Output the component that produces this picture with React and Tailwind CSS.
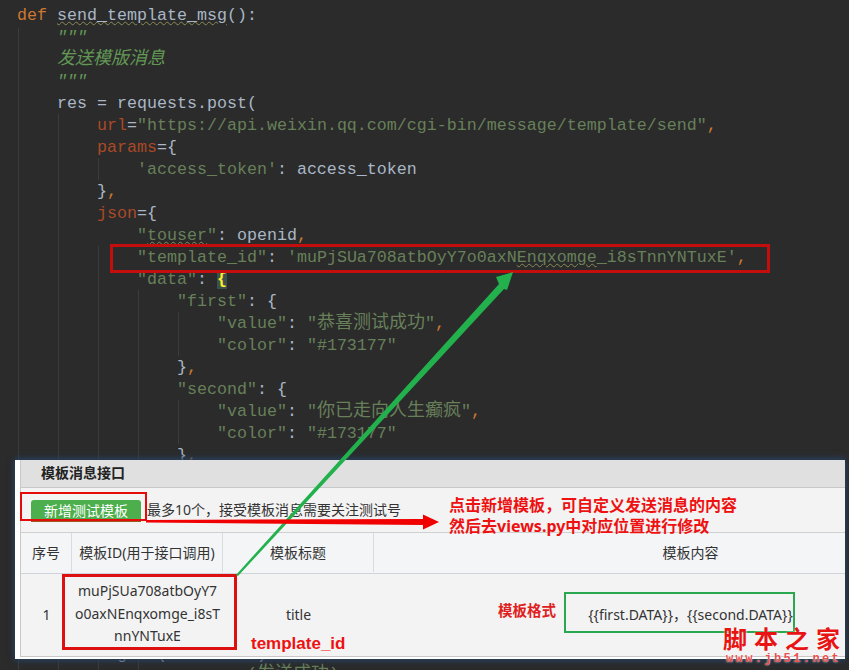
const mono = "font-['Liberation_Mono','Noto_Sans_CJK_SC',monospace]";
const sans = "font-['Noto_Sans','Noto_Sans_CJK_SC',sans-serif]";

const S = ({ c, children }) => <span className={c}>{children}</span>;
const str = "text-[#67805a]";
const key = "text-[#aa4926]";
const org = "text-[#cc7832]";
const doc = "text-[#629755] italic";
const cjk = "text-[18px] leading-[18px]";
const wavy = "underline decoration-wavy decoration-[#8a8a5a] decoration-1";

// 编辑器里露出来的每一行
const lines = [
  <><S c={org}>def </S><span className={wavy}>send_template_msg</span>():</>,
  <>    <S c={doc}>"""</S></>,
  <>    <S c={`${doc} ${cjk}`}>发送模版消息</S></>,
  <>    <S c={doc}>"""</S></>,
  <>    res = requests.post(</>,
  <>        <S c={key}>url</S>=<S c={str}>"https://api.weixin.qq.com/cgi-bin/message/template/send"</S><S c={org}>,</S></>,
  <>        <S c={key}>params</S>={"{"}</>,
  <>            <S c={str}>'access_token'</S>: access_token</>,
  <>        {"}"}<S c={org}>,</S></>,
  <>        <S c={key}>json</S>={"{"}</>,
  <>            <S c={str}>"<span className={wavy}>touser</span>"</S>: openid<S c={org}>,</S></>,
  <>            <S c={str}>"template_id"</S>: <S c={str}>'muPjSUa708atbOyY7o0axN<span className={wavy}>Enqxomge</span>_i8sTnnYNTuxE'</S><S c={org}>,</S></>,
  <>            <S c={str}>"data"</S>: <span className="bg-[#3b514d] text-[#ffef28] font-bold">{"{"}</span></>,
  <>                <S c={str}>"first"</S>: {"{"}</>,
  <>                    <S c={str}>"value"</S>: <S c={str}>"<span className={cjk}>恭喜测试成功</span>"</S><S c={org}>,</S></>,
  <>                    <S c={str}>"color"</S>: <S c={str}>"#173177"</S></>,
  <>                {"}"}<S c={org}>,</S></>,
  <>                <S c={str}>"second"</S>: {"{"}</>,
  <>                    <S c={str}>"value"</S>: <S c={str}>"<span className={cjk}>你已走向人生癫疯</span>"</S><S c={org}>,</S></>,
  <>                    <S c={str}>"color"</S>: <S c={str}>"#173177"</S></>,
  <>                {"}"}<S c={org}>,</S></>,
];

const guides = [
  "left-[18px] top-[28px] h-[642px]",
  "left-[58px] top-[114px] h-[556px]",
  "left-[98px] top-[158px] h-[22px]",
  "left-[98px] top-[246px] h-[424px]",
  "left-[138px] top-[290px] h-[380px]",
  "left-[178px] top-[312px] h-[44px]",
  "left-[178px] top-[400px] h-[44px]",
];

function Panel() {
  return (
    <div className={`absolute left-[15px] top-[460px] w-[830px] h-[199px] border-l-[5px] border-b-[2px] border-white shadow-[0_-2px_6px_#27405c,0_2px_6px_#27405c] flex ${sans} text-[14px] text-[#333]`}>
      <div className="flex-1 flex flex-col bg-[#f3f3f3] border-l border-b border-[#c8c8c8]">
        <div className="h-[28px] shrink-0 bg-[#e0e0e0] border-b border-[#c8c8c8] pl-[20px] pb-[2px] flex items-center font-bold text-[#222]">
          模板消息接口
        </div>
        <div className="h-[45px] shrink-0 border-b border-[#d0d0d0] flex items-center pl-[10px] pt-[1px]">
          <div className="w-[110px] h-[22px] pt-[2px] bg-[#4cae4c] rounded-t-[3px] border-b-2 border-[#9a5a20] text-white flex items-center justify-center">新增测试模板</div>
          <span className="ml-[6px] pb-[3px]">最多10个，接受模板消息需要关注测试号</span>
        </div>
        <div className="h-[41px] shrink-0 border-b border-[#d0d4da] bg-[#f4f5f7] flex text-center items-stretch pb-[1px]">
          <div className="w-[51px] border-r border-[#d8dbe0] flex items-center justify-center">序号</div>
          <div className="w-[151px] border-r border-[#d8dbe0] flex items-center justify-center">模板ID(用于接口调用)</div>
          <div className="w-[151px] border-r border-[#d8dbe0] flex items-center justify-center">模板标题</div>
          <div className="flex-1 flex items-center justify-center pl-[162px]">模板内容</div>
        </div>
        <div className="flex-1 flex text-center items-center pb-[2px]">
          <div className="w-[51px]">1</div>
          <div className="w-[151px] leading-[22.5px] px-[1px]">muPjSUa708atbOyY7<br />o0axNEnqxomge_i8sT<br />nnYNTuxE</div>
          <div className="w-[151px]">title</div>
          <div className="flex-1 flex justify-center pl-[162px] whitespace-nowrap">{"{{first.DATA}}，{{second.DATA}}"}</div>
        </div>
      </div>
    </div>
  );
}

export default function App() {
  return (
    <div className="relative w-[849px] h-[670px] overflow-hidden bg-[#2b2b2b]">
      <div className={`${mono} text-[16.67px] leading-[22px] text-[#a9b7c6] whitespace-pre pl-[17px] pt-[5px]`}>
        {lines.map((l, i) => <div key={i} className="h-[22px]">{l}</div>)}
      </div>

      {guides.map((g, i) => <div key={i} className={`absolute w-px bg-[#3c3c3c] ${g}`} />)}

      {/* 面板下面露出来的半截代码 */}
      <div className={`absolute left-[17px] top-[644px] ${mono} text-[16.67px] leading-[22px] text-[#a9b7c6] whitespace-pre`}>
        {"          g   (         )"}
      </div>
      <div className={`absolute left-[17px] top-[664px] ${mono} text-[16.67px] leading-[22px] text-[#67805a] whitespace-pre`}>
        {"                       ("}<span className={cjk}>发送成功</span>{")"}
      </div>

      <Panel />

      {/* 红框、绿框 */}
      <div className="absolute left-[110px] top-[244px] w-[660px] h-[29px] border-[3px] border-[#c40d0d]" />
      <div className="absolute left-[20px] top-[492px] w-[127px] h-[29px] border-[2px] border-[#e60b0b]" />
      <div className="absolute left-[62px] top-[574px] w-[175px] h-[76px] border-[3px] border-[#dc1010]" />
      <div className="absolute left-[564px] top-[592px] w-[231px] h-[41px] border-[2px] border-[#2aa84f]" />

      {/* 标注箭头 */}
      <svg className="absolute left-0 top-0" width="849" height="670" viewBox="0 0 849 670">
        <polygon points="513,272 496,277 499,284 236,575 238,576 504,289 507,290" fill="#22b14c" />
        <polygon points="146,520 423,519 423,514.5 439,522 423,529.5 423,525 146,522.5" fill="#f00000" />
      </svg>

      <div className={`absolute left-[449px] top-[495px] ${sans} font-bold text-[16px] leading-[21px] text-[#ee1111] whitespace-nowrap`}>
        点击新增模板，可自定义发送消息的内容<br />然后去views.py中对应位置进行修改
      </div>
      <div className="absolute left-[251px] top-[634px] font-['Liberation_Sans',sans-serif] font-bold text-[17px] leading-[20px] text-[#ee1111]">template_id</div>
      <div className={`absolute left-[498px] top-[600px] ${sans} font-bold text-[14.5px] leading-[20px] text-[#e02020]`}>模板格式</div>

      {/* 水印 */}
      <div className="absolute left-[723px] top-[621px] font-['Noto_Sans_CJK_SC',sans-serif] font-bold text-[24px] leading-[34px] tracking-[7px] text-[#e81414] [text-shadow:0_0_2px_#fff] whitespace-nowrap">脚本之家</div>
      <div className="absolute left-[726px] top-[652px] font-['Liberation_Mono',monospace] font-bold text-[12px] leading-[14px] tracking-[2.4px] text-[#e85050] [text-shadow:0_0_2px_#fff] whitespace-nowrap">www.jb51.net</div>
    </div>
  );
}
